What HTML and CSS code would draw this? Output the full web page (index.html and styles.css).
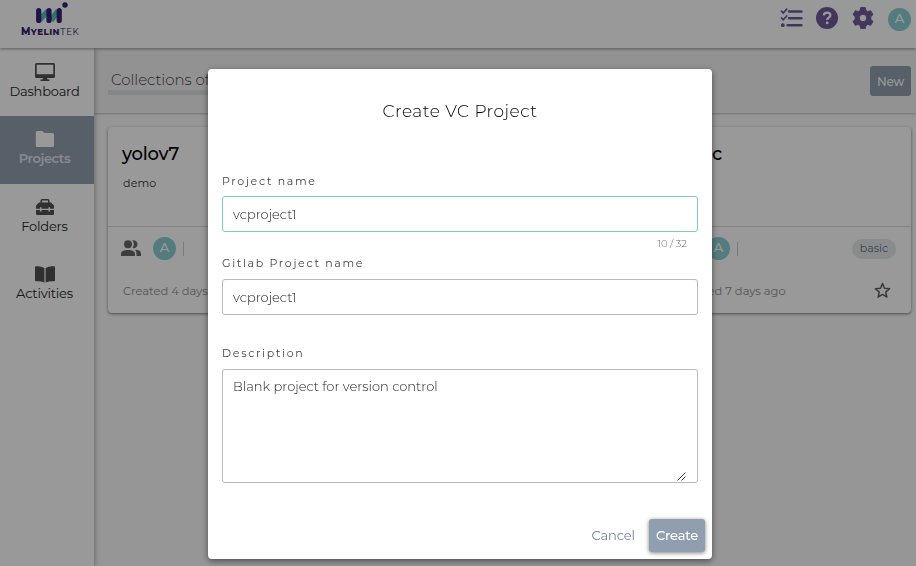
FILE: index.html
```html
<!DOCTYPE html>
<html lang="en">
<head>
<meta charset="utf-8">
<title>MyelinTek</title>
<link rel="stylesheet" href="styles.css">
</head>
<body>
<header class="topbar">
  <div class="brand">
    <svg class="brand-mark" width="32" height="22" viewBox="0 0 32 22">
      <path d="M3 18.500 12 9M15 18.500 22 9" stroke="#4cc3b5" stroke-width="5.500"/>
      <path d="M2.700 8.500v10M13 8.500v10M23.200 8.500v10" stroke="#3b1d78" stroke-width="5.200" stroke-linecap="round"/>
      <circle cx="29" cy="3" r="2.700" fill="#3b1d78"/>
    </svg>
    <div class="brand-name"><b>M<small>YELIN</small></b>T<small>EK</small></div>
  </div>
  <nav class="tools">
    <svg width="24" height="20" viewBox="0 0 24 20" fill="none" stroke="#715a9b" stroke-width="2.400" stroke-linecap="round">
      <path d="M9 3.500h12.500M9 10.300h12.500M7.500 17.200h14"/>
      <path d="M1.500 3.200 3.200 5 6.700 1.200M1.500 10 3.200 11.800 6.700 8" stroke-width="1.700"/>
      <circle cx="2.800" cy="17.200" r="1.900" fill="#715a9b" stroke="none"/>
    </svg>
    <svg width="22" height="22" viewBox="0 0 22 22">
      <circle cx="11" cy="11" r="11" fill="#715a9b"/>
      <path d="M7.800 8.300c.2-1.800 1.500-2.700 3.300-2.700 2 0 3.300 1.100 3.300 2.700 0 2.300-3.200 2.400-3.200 4.700" fill="none" stroke="#fff" stroke-width="2.300"/>
      <circle cx="11.200" cy="15.900" r="1.450" fill="#fff"/>
    </svg>
    <svg width="22" height="22" viewBox="0 0 24 24" fill="#715a9b">
      <path fill-rule="evenodd" d="M9.500.5h5l.7 3.300 2 1.200 3.200-1 2.500 4.300-2.400 2.300v2.800l2.400 2.300-2.500 4.300-3.200-1-2 1.200-.7 3.300h-5l-.7-3.300-2-1.200-3.200 1-2.500-4.300 2.400-2.300v-2.800L1.100 8.300 3.600 4l3.200 1 2-1.200zM12 8a4 4 0 1 0 0 8 4 4 0 0 0 0-8z" stroke="#715a9b" stroke-linejoin="round"/>
    </svg>
    <span class="avatar">A</span>
  </nav>
</header>
<div class="shell">
  <aside class="sidebar">
    <a class="side-item">
      <svg width="20" height="18" viewBox="0 0 20 18"><path fill-rule="evenodd" fill="currentColor" d="M1.500 0h17Q20 0 20 1.500v12q0 1.500-1.500 1.500H12l.5 1.600h2V18h-9v-1.400h2L8 15H1.500Q0 15 0 13.500v-12Q0 0 1.500 0zM1.700 1.700v9.500h16.600V1.700z"/></svg>
      <span>Dashboard</span>
    </a>
    <a class="side-item active">
      <svg width="20" height="18" viewBox="0 0 20 18"><path fill="currentColor" d="M2.300 1h5l2.200 2h8q1.500 0 1.500 1.500v11q0 1.500-1.500 1.500H2.300Q.8 17 .8 15.500v-13Q.8 1 2.300 1z"/></svg>
      <span>Projects</span>
    </a>
    <a class="side-item">
      <svg width="20" height="18" viewBox="0 0 20 18"><path fill="currentColor" fill-rule="evenodd" d="M7 1h6q1.500 0 1.500 1.500v2H16l3 3v3.200h-4V9.200h-1.500v1.500h-7V9.200H5v1.500H1V7.500l3-3h1.500v-2Q5.500 1 7 1zM7 2.500v2h6v-2zM1 12h4v1.400h1.500V12h7v1.400H15V12h4v3.800q0 1.200-1.200 1.200H2.200Q1 17 1 15.800z"/></svg>
      <span>Folders</span>
    </a>
    <a class="side-item">
      <svg width="20" height="18" viewBox="0 0 20 18"><path fill="currentColor" d="M9.400 3Q6 .8 1 1.300q-1 .1-1 1v13q0 1 1 1 5-.3 8.400 1.200zM10.600 3Q14 .8 19 1.300q1 .1 1 1v13q0 1-1 1-5-.3-8.400 1.200z"/></svg>
      <span>Activities</span>
    </a>
  </aside>
  <main class="main">
    <div class="page-head">
      <h1 class="page-title">Collections of projects</h1>
      <button class="new-button">New</button>
    </div>
    <section class="cards">
      <article class="card">
        <div class="card-info"><h2>yolov7</h2><p>demo</p></div>
        <div class="card-members">
          <svg width="20" height="17" viewBox="0 0 20 17" fill="#666"><circle cx="7" cy="4.300" r="4"/><path d="M0 16v-2c0-3 3-4 7-4s7 1 7 4v2zM11.300.5a4 4 0 1 1 0 7.600c2-2 2-5.600 0-7.600zM14 9.800c4 0 6 1.600 6 4V16h-4.500v-2c0-1.800-.6-3.200-1.500-4.200z"/></svg>
          <span class="avatar">A</span><i class="divider"></i>
        </div>
        <div class="card-foot"><span>Created 4 days ago</span></div>
      </article>
      <article class="card last">
        <div class="card-info"><h2>basic</h2></div>
        <div class="card-members">
          <svg width="20" height="17" viewBox="0 0 20 17" fill="#666"><circle cx="7" cy="4.300" r="4"/><path d="M0 16v-2c0-3 3-4 7-4s7 1 7 4v2z"/></svg>
          <span class="avatar">A</span><i class="divider"></i>
          <span class="tag">basic</span>
        </div>
        <div class="card-foot"><span>Created 7 days ago</span>
          <svg width="17" height="17" viewBox="0 0 17 17" fill="none" stroke="#606060" stroke-width="1.500" stroke-linejoin="round"><path d="m8.500 1.500 2 4.700 5.100.5-3.900 3.400 1.200 5-4.400-2.700-4.400 2.700 1.200-5-3.900-3.400 5.100-.5z"/></svg>
        </div>
      </article>
    </section>
  </main>
</div>
<div class="overlay">
  <form class="dialog">
    <h3 class="dialog-title">Create VC Project</h3>
    <label class="label">Project name</label>
    <div class="field focus">vcproject1</div>
    <div class="counter">10 / 32</div>
    <label class="label">Gitlab Project name</label>
    <div class="field">vcproject1</div>
    <label class="label label-desc">Description</label>
    <div class="field area">Blank project for version control
      <svg class="grip" width="9" height="9" viewBox="0 0 9 9" stroke="#444" stroke-width="1"><path d="M.5 8.500l8-8M4.500 8.500l4-4"/></svg>
    </div>
    <div class="actions">
      <button type="button" class="cancel">Cancel</button>
      <button type="button" class="create">Create</button>
    </div>
  </form>
</div>
</body>
</html>
```
FILE: styles.css
```css
* { box-sizing: border-box; }
body { margin: 0; height: 566px; overflow: hidden; background: #fafafa; font-family: Montserrat, Inter, sans-serif; font-size: 13px; color: #333; }
h1, h2, h3, p { margin: 0; font-weight: 400; }
svg { display: block; flex: none; }
button { font: inherit; border: 0; border-radius: 3px; padding: 0; }

.topbar { position: relative; z-index: 2; height: 48px; display: flex; justify-content: space-between; background: #fff; box-shadow: 0 1px 3px rgba(0,0,0,.4); }
.brand { width: 100px; padding-top: 2px; display: flex; flex-direction: column; align-items: center; }
.brand-mark { margin-left: 4px; }
.brand-name { font-size: 9.800px; line-height: 12px; margin-top: 2px; color: #3b1d78; white-space: nowrap; letter-spacing: .5px; }
.brand-name b { font-weight: 800; }
.brand-name small { font-size: 8.600px; }
.tools { display: flex; align-items: center; padding: 0 5px 12px 0; }
.tools svg:nth-child(1) { margin-right: 12px; }
.tools svg:nth-child(2) { margin-right: 14px; }
.tools svg:nth-child(3) { margin-right: 14px; }
.tools .avatar { position: relative; top: 1px; }
.avatar { width: 23px; height: 23px; flex: none; border-radius: 50%; background: #8ccfd2; color: #fff; font-size: 13px; font-weight: 500; line-height: 21px; text-align: center; }

.shell { display: flex; height: 518px; }
.sidebar { width: 94px; flex: none; position: relative; z-index: 1; padding-top: 1px; background: #fff; box-shadow: 1px 0 5px rgba(0,0,0,.3); }
.side-item { height: 67px; display: flex; flex-direction: column; align-items: center; padding: 14px 5px 0 0; color: #505050; }
.side-item span { margin-top: 2px; line-height: 17px; font-size: 13px; letter-spacing: -.2px; color: #262626; }
.side-item.active { height: 68px; background: #919eaf; color: #fff; }
.side-item.active span { color: #fff; font-weight: 600; opacity: .75; letter-spacing: -.4px; }

.main { flex: 1; min-width: 0; }
.page-head { height: 65px; display: flex; justify-content: space-between; align-items: flex-start; padding: 18px 5px 0 14px; background: #f4f4f4; box-shadow: 0 1px 2px rgba(0,0,0,.25); }
.page-title { font-size: 15px; line-height: 20px; margin-top: 4px; padding-left: 3px; font-weight: 300; letter-spacing: -.05px; color: #444; border-bottom: 5px solid #dcdfe3; }
.new-button { width: 41px; height: 30px; background: #919eaf; color: #fff; font-size: 12px; font-weight: 500; letter-spacing: -.2px; }
.cards { display: grid; grid-template-columns: repeat(3, 1fr); gap: 28px; padding: 14px 5px 0 14px; }
.card { height: 186px; background: #fff; border-radius: 4px; box-shadow: 0 1px 3px rgba(0,0,0,.5); }
.card.last { grid-column: 3; }
.card-info { height: 100px; padding: 16px 14px; border-bottom: 1px solid #ddd; }
.card-info h2 { font-size: 18px; line-height: 22px; font-weight: 500; letter-spacing: -.25px; color: #000; }
.card-info p { margin-top: 10px; padding-left: 1px; font-size: 11px; line-height: 16px; letter-spacing: .2px; }
.card-members { height: 43px; display: flex; align-items: center; padding: 0 15px 0 13px; }
.card-members .avatar { margin-left: 12px; }
.divider { width: 1px; height: 14px; background: #ccc; margin-left: 7px; }
.tag { width: 44px; height: 20px; margin-left: auto; border-radius: 10px; background: #e3e9eb; color: #65708a; font-size: 11px; line-height: 19px; text-align: center; }
.card-foot { height: 41px; display: flex; align-items: center; justify-content: space-between; padding: 0 20px 0 15px; font-size: 11.500px; letter-spacing: -.03px; color: #909090; }

.overlay { position: fixed; inset: 0; z-index: 5; display: flex; justify-content: center; align-items: flex-start; padding-top: 69px; padding-left: 4px; background: rgba(0,0,0,.4); }
.dialog { width: 504px; height: 490px; padding: 0 14px; background: #fff; border-radius: 4px; box-shadow: 0 2px 6px rgba(0,0,0,.5); }
.dialog-title { height: 105px; padding-top: 31px; text-align: center; font-size: 17px; line-height: 22px; font-weight: 300; letter-spacing: .5px; color: #000; }
.label { display: block; height: 22px; padding-left: 0; font-size: 11px; line-height: 15px; font-weight: 400; letter-spacing: 1.700px; color: #444; }
.field { height: 36px; padding: 0 10px; border: 1px solid #bababa; border-radius: 3px; font-size: 13px; line-height: 34px; font-weight: 300; color: #222; }
.field.focus { border-color: #7fc8cc; }
.counter { height: 24px; padding: 5px 11px 0 0; text-align: right; font-size: 10px; line-height: 14px; font-weight: 300; color: #666; }
.label + .field:not(.focus) { margin-top: 1px; }
.label-desc { margin-top: 31px; }
.field.area { position: relative; height: 114px; line-height: 32px; }
.grip { position: absolute; right: 11px; bottom: 1px; }
.actions { display: flex; justify-content: flex-end; align-items: center; margin: 36px -7px 0 0; }
.cancel { background: none; color: #74829b; font-size: 13px; line-height: 16px; padding-bottom: 2px; margin-right: 14px; letter-spacing: -.1px; }
.create { width: 56px; height: 33px; padding-bottom: 1px; background: #919eaf; color: #fff; font-size: 13px; font-weight: 500; letter-spacing: -.15px; box-shadow: 0 1px 4px rgba(0,0,0,.5); }
```
